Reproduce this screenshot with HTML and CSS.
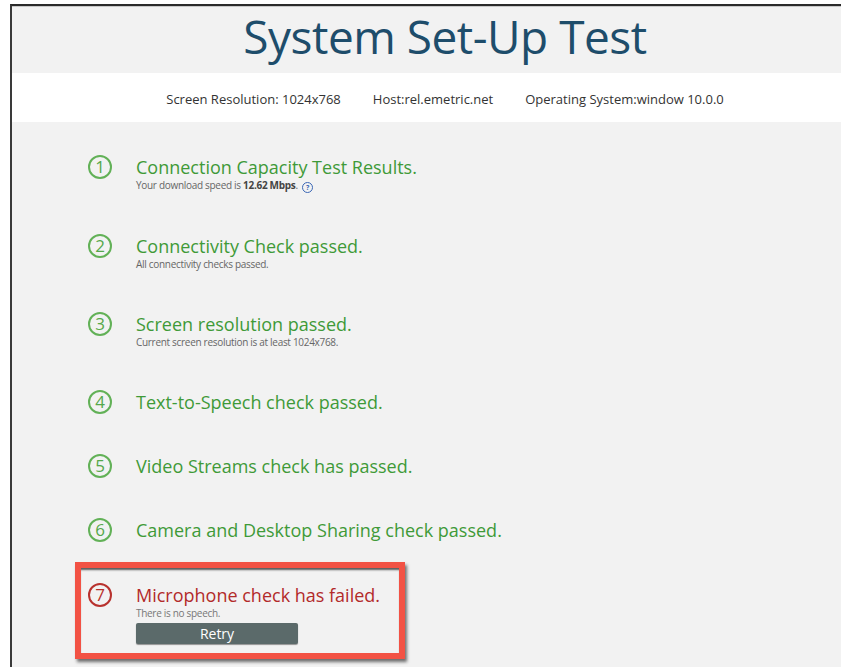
FILE: index.html
```html
<!DOCTYPE html>
<html lang="en">
<head>
<meta charset="utf-8">
<title>System Set-Up Test</title>
<link rel="stylesheet" href="styles.css">
</head>
<body>
<div class="frame">
  <header class="page-head">
    <h1 class="title">System Set-Up Test</h1>
  </header>
  <div class="sysinfo">
    <span>Screen Resolution: 1024x768</span>
    <span>Host:rel.emetric.net</span>
    <span>Operating System:window 10.0.0</span>
  </div>
  <main class="checks">
    <div class="check">
      <div class="num">1</div>
      <div class="body">
        <div class="name">Connection Capacity Test Results.</div>
        <div class="detail">Your download speed is <b>12.62 Mbps</b>. <span class="help">?</span></div>
      </div>
    </div>
    <div class="check">
      <div class="num">2</div>
      <div class="body">
        <div class="name">Connectivity Check passed.</div>
        <div class="detail">All connectivity checks passed.</div>
      </div>
    </div>
    <div class="check">
      <div class="num">3</div>
      <div class="body">
        <div class="name">Screen resolution passed.</div>
        <div class="detail">Current screen resolution is at least 1024x768.</div>
      </div>
    </div>
    <div class="check">
      <div class="num">4</div>
      <div class="body">
        <div class="name">Text-to-Speech check passed.</div>
      </div>
    </div>
    <div class="check">
      <div class="num">5</div>
      <div class="body">
        <div class="name">Video Streams check has passed.</div>
      </div>
    </div>
    <div class="check">
      <div class="num">6</div>
      <div class="body">
        <div class="name">Camera and Desktop Sharing check passed.</div>
      </div>
    </div>
    <div class="failed-box">
      <div class="check failed">
        <div class="num">7</div>
        <div class="body">
          <div class="name">Microphone check has failed.</div>
          <div class="detail">There is no speech.</div>
          <button class="retry">Retry</button>
        </div>
      </div>
    </div>
  </main>
</div>
</body>
</html>
```
FILE: styles.css
```css
html, body {
  margin: 0;
  padding: 0;
  background: #fff;
  overflow: hidden;
  height: 667px;
}

body {
  font-family: "Open Sans", "DejaVu Sans", sans-serif;
}

.frame {
  margin: 4px 0 0 10px;
  width: 866px;
  height: 663px;
  overflow: hidden;
  border-top: 2px solid #2a2a2a;
  border-left: 2px solid #3a3a3a;
  background: #f2f2f2;
}

.page-head {
  height: 67px;
  background: #f2f2f2;
  border-top: 1px solid #c8c8c8;
  box-sizing: border-box;
  display: flex;
  justify-content: center;
}

.title {
  margin: 0;
  font-weight: 400;
  font-size: 46px;
  line-height: 58px;
  color: #1e4d6b;
  letter-spacing: -0.5px;
}

.sysinfo {
  height: 49px;
  box-sizing: border-box;
  padding-top: 3px;
  background: #fff;
  display: flex;
  justify-content: center;
  align-items: center;
  gap: 32px;
  font-size: 13px;
  color: #333;
}

.checks {
  padding: 34px 0 0 76px;
  display: flex;
  flex-direction: column;
}

.check {
  display: flex;
  align-items: flex-start;
  gap: 24px;
  margin-bottom: 42px;
}

.num {
  width: 20px;
  height: 20px;
  margin: -1px 0 -3px;
  border: 2px solid #62b157;
  border-radius: 50%;
  color: #55a84b;
  font-size: 17px;
  line-height: 20px;
  text-align: center;
  flex: none;
}

.name {
  font-size: 18px;
  line-height: 22px;
  color: #3f9a38;
}

.detail {
  font-size: 10px;
  line-height: 14px;
  color: #666;
  letter-spacing: -0.3px;
}

.detail b {
  color: #444;
}

.help {
  display: inline-block;
  width: 9px;
  height: 9px;
  border: 1px solid #3a66b5;
  border-radius: 50%;
  color: #3a66b5;
  font-size: 7px;
  line-height: 9px;
  text-align: center;
  font-weight: 700;
  vertical-align: -1px;
  margin-left: 2px;
  letter-spacing: 0;
}

.failed-box {
  margin: -21px 0 0 -13px;
  width: 311px;
  border: 6px solid #f25244;
  box-shadow: 2px 3px 3px rgba(40, 40, 40, 0.65), inset 0 3px 2px -1px rgba(40, 40, 40, 0.75);
  padding: 16px 0 9px 7px;
}

.failed .num {
  border-color: #b8322e;
  color: #b8322e;
}

.failed .name {
  color: #b22a2a;
}

.failed .detail {
  color: #777;
}

.failed.check {
  margin-bottom: 0;
}

.retry {
  display: block;
  margin-top: 3px;
  width: 162px;
  height: 21px;
  border: none;
  border-radius: 2px;
  background: #5b6a6a;
  color: #fff;
  font-family: "Open Sans", sans-serif;
  font-size: 14px;
  line-height: 21px;
  padding: 0;
  box-shadow: 0 1px 1px rgba(0, 0, 0, 0.4);
}
```
